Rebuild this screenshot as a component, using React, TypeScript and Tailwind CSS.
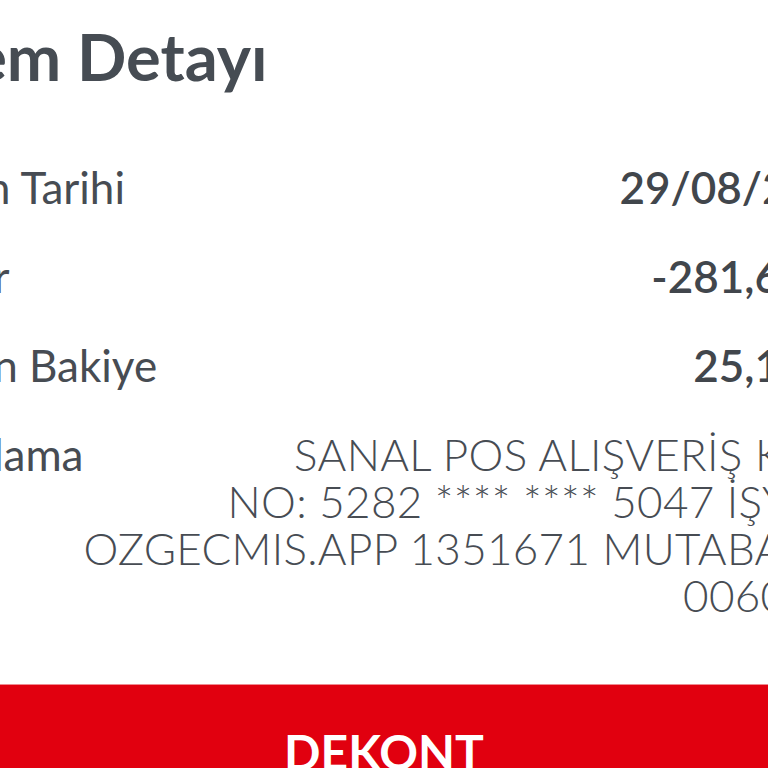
import React from "react";

const ROWS: { label: string; value: string }[] = [
  { label: "İşlem Tarihi", value: "29/08/2023" },
  { label: "Tutar", value: "-281,60 TL" },
  { label: "Kalan Bakiye", value: "25,13 TL" },
];

const DESCRIPTION = [
  "SANAL POS ALIŞVERİŞ KART",
  "NO: 5282 **** **** 5047 İŞYERİ:",
  "OZGECMIS.APP 1351671 MUTABAKAT",
  "0060123",
];

export default function App() {
  return (
    <div
      className="w-[768px] h-[768px] overflow-hidden bg-white text-[#474c53]"
      style={{ fontFamily: "Lato, 'Noto Sans', sans-serif" }}
    >
      <div className="ml-[-76px] w-[920px]">
        <h1 className="ml-[-15px] pt-[20px] text-[65px] leading-[72px] font-bold text-[#464c53] whitespace-nowrap">
          İşlem Detayı
        </h1>

        <div className="mt-[51px]">
          {ROWS.map((r) => (
            <div
              key={r.label}
              className="flex justify-between py-[21px] text-[44px] leading-[47px]"
            >
              <span className="ml-[-14px]">{r.label}</span>
              <span className="mr-[-20px] font-semibold text-[#41464c]">{r.value}</span>
            </div>
          ))}

          <div className="flex justify-between py-[21px] text-[44px] leading-[47px]">
            <span className="ml-[-14px]">Açıklama</span>
            <div className="mr-[12px] flex flex-col items-end font-light text-right tracking-[0.3px]">
              {DESCRIPTION.map((line) => (
                <span key={line} className="whitespace-nowrap">
                  {line}
                </span>
              ))}
            </div>
          </div>
        </div>
      </div>

      <div className="mt-[44px] h-[200px] bg-[#e1000f] border-t border-[#ef8a90] pt-[43px] text-center">
        <span className="text-white text-[48px] leading-[48px] font-bold">DEKONT</span>
      </div>
    </div>
  );
}
